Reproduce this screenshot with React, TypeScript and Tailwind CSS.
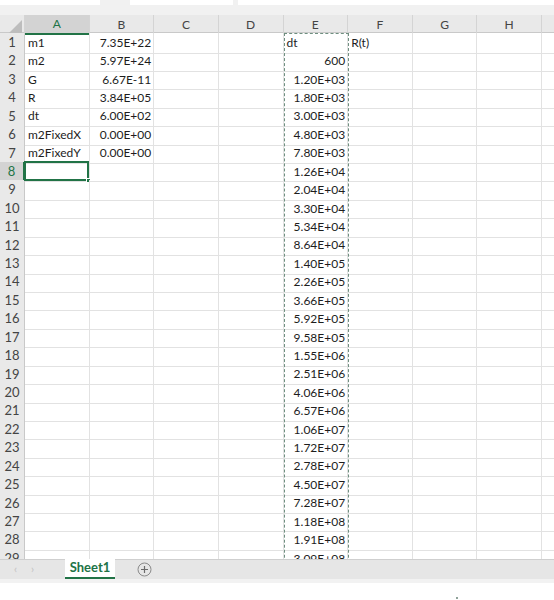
import React from "react";

const COLS = ["A", "B", "C", "D", "E", "F", "G", "H"];

const colA = ["m1", "m2", "G", "R", "dt", "m2FixedX", "m2FixedY"];
const colB = ["7.35E+22", "5.97E+24", "6.67E-11", "3.84E+05", "6.00E+02", "0.00E+00", "0.00E+00"];
const colE = [
  "dt", "600", "1.20E+03", "1.80E+03", "3.00E+03", "4.80E+03", "7.80E+03", "1.26E+04",
  "2.04E+04", "3.30E+04", "5.34E+04", "8.64E+04", "1.40E+05", "2.26E+05", "3.66E+05",
  "5.92E+05", "9.58E+05", "1.55E+06", "2.51E+06", "4.06E+06", "6.57E+06", "1.06E+07",
  "1.72E+07", "2.78E+07", "4.50E+07", "7.28E+07", "1.18E+08", "1.91E+08", "3.09E+08",
];

const gridCols = "grid grid-cols-[25px_repeat(8,64.625px)_1fr]";

const cellText = (row: number, col: number): { text: string; right: boolean } | null => {
  if (col === 0 && row < colA.length) return { text: colA[row], right: false };
  if (col === 1 && row < colB.length) return { text: colB[row], right: true };
  if (col === 4) return { text: colE[row], right: row !== 0 };
  if (col === 5 && row === 0) return { text: "R(t)", right: false };
  return null;
};

const App = () => {
  return (
    <div className="w-[554px] h-[600px] overflow-hidden bg-white flex flex-col font-['Lato',sans-serif] text-[12px] text-[#1d1d1d]">
      {/* Toolbar remnants */}
      <div className="h-[15px] bg-[#f1f1f1] shrink-0 flex items-start">
        <div className="w-[100px] h-[5px] bg-white" />
        <div className="w-[103px] h-[5px] bg-white ml-[30px]" />
        <div className="flex-1 h-[5px] bg-white ml-[5px]" />
      </div>

      {/* Sheet */}
      <div className="relative flex-1 overflow-hidden">
        {/* Column headers */}
        <div className={`${gridCols} h-[18px] bg-[#e9e9e9] border-b border-[#c9c9c9] text-[#444]`}>
          <div className="relative border-r border-[#d4d4d4]">
            <div className="absolute right-[2px] bottom-[2px] w-0 h-0 border-l-[13px] border-l-transparent border-b-[13px] border-b-[#bdbdbd]" />
          </div>
          {COLS.map((c, i) => (
            <div
              key={c}
              className={
                i === 0
                  ? "flex items-center justify-center bg-[#d3d3d3] text-[#217346] border-b-2 border-[#217346] border-r border-r-[#d4d4d4]"
                  : "flex items-center justify-center border-r border-[#d4d4d4]"
              }
            >
              {c}
            </div>
          ))}
          <div />
        </div>

        {/* Rows */}
        {Array.from({ length: 29 }, (_, r) => (
          <div key={r} className={`${gridCols} h-[18.43px]`}>
            <div
              className={
                r === 7
                  ? "flex items-center justify-center bg-[#d3d3d3] text-[#217346] border-r-2 border-[#217346] border-b border-b-[#d4d4d4] text-[13px]"
                  : "flex items-center justify-center bg-[#e9e9e9] text-[#444] border-r border-[#c9c9c9] border-b border-b-[#d4d4d4] text-[13px]"
              }
            >
              {r + 1}
            </div>
            {COLS.map((c, ci) => {
              const t = cellText(r, ci);
              const selected = r === 7 && ci === 0;
              return (
                <div
                  key={c}
                  className={`relative flex items-center whitespace-nowrap border-r border-b border-[#e2e2e2] ${
                    t?.right ? "justify-end pr-[2px]" : "justify-start pl-[3px]"
                  }`}
                >
                  {t?.text}
                  {selected && (
                    <div className="absolute -left-[1px] -top-[1px] right-0 bottom-0 border-2 border-[#217346]">
                      <div className="absolute -right-[4px] -bottom-[4px] w-[5px] h-[5px] bg-[#217346] border border-white" />
                    </div>
                  )}
                </div>
              );
            })}
            <div className="border-b border-[#e2e2e2]" />
          </div>
        ))}

        {/* Copy marquee around column E */}
        <div className="absolute left-[283.5px] top-[18px] w-[65px] h-[600px] border border-dashed border-[#6f8f80]" />
      </div>

      {/* Sheet tabs */}
      <div className="h-[20px] shrink-0 bg-[#e6e6e6] border-t border-[#cfcfcf] flex items-stretch">
        <div className="w-[65px] flex items-center gap-[14px] pl-[14px] text-[#c2c2c2] text-[11px]">
          <span>‹</span>
          <span>›</span>
        </div>
        <div className="w-[50px] bg-white border-b-2 border-[#217346] flex items-center justify-center font-bold text-[13px] text-[#217346] -mt-px">
          Sheet1
        </div>
        <div className="flex items-center pl-[22px]">
          <svg width="15" height="15" viewBox="0 0 15 15">
            <circle cx="7.5" cy="7.5" r="6.5" fill="none" stroke="#8a8a8a" strokeWidth="1" />
            <path d="M7.5 4v7M4 7.5h7" stroke="#6a6a6a" strokeWidth="1.2" />
          </svg>
        </div>
      </div>
      <div className="h-[4px] shrink-0 bg-[#f2f2f2]" />
      <div className="h-[17px] shrink-0 bg-white relative">
        <div className="absolute left-[456px] bottom-[1px] w-[2px] h-[2px] bg-[#8fa39a]" />
      </div>
    </div>
  );
};

export default App;
